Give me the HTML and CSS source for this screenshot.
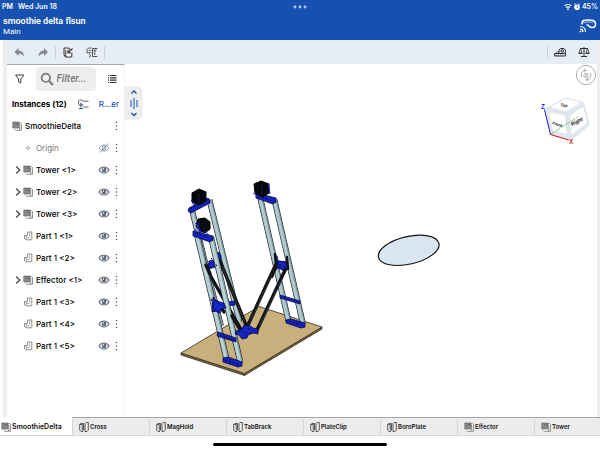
FILE: index.html
```html
<!DOCTYPE html>
<html lang="en">
<head>
<meta charset="utf-8">
<meta name="viewport" content="width=device-width, initial-scale=1">
<title>smoothie delta flsun</title>
<link rel="stylesheet" href="styles.css">
</head>
<body>
<svg class="defs" aria-hidden="true">
  <symbol id="assembly" viewBox="0 0 10 10"><path d="M3 2.500V1.500h5.500l1 1v6.800H3.500L2.500 8.500" fill="#fff" stroke="#666" stroke-width=".7"/><path d="M.8 1h6v6H.8z" fill="#8b8b8b" stroke="#666" stroke-width=".7"/><path d="M3 3h4.700v6" fill="none" stroke="#555" stroke-width=".7"/></symbol>
  <symbol id="part" viewBox="0 0 10 10"><path d="M4.500 1h4.300v7.800H3.500L1.500 7.800V4.500h3z" fill="#fff" stroke="#777" stroke-width=".8"/><path d="M1.500 4.800l2 1v2.500M3.500 6.500h2.200l1-1V1.500" fill="none" stroke="#888" stroke-width=".7"/></symbol>
  <symbol id="studio" viewBox="0 0 10 10"><path d="M4 9.500H2L.7 8V2.500L2 1.500h2.500v7M6 1.500L7 .5h2.300V8L8 9.500H6zM.7 2.500h2.600v6" fill="none" stroke="#333" stroke-width=".8"/></symbol>
  <symbol id="eye" viewBox="0 0 12 10"><path d="M1 5C3.500 1 8.500 1 11 5 8.500 9 3.500 9 1 5z" fill="#fff" stroke="#66727e" stroke-width="1.100"/><circle cx="6" cy="4.800" r="2.400" fill="#5b6773"/><circle cx="5.300" cy="4" r=".8" fill="#fff"/></symbol>
  <symbol id="eye-off" viewBox="0 0 12 10"><path d="M1 5C3.500 1 8.500 1 11 5 8.500 9 3.500 9 1 5z" fill="none" stroke="#8c98a4"/><circle cx="6" cy="5" r="1.800" fill="none" stroke="#8c98a4"/><path d="M2 9.500L10.500.5" stroke="#8c98a4"/></symbol>
  <symbol id="dots" viewBox="0 0 6 10"><g fill="#4d5966"><circle cx="3.500" cy="1.500" r=".8"/><circle cx="3.500" cy="5" r=".8"/><circle cx="3.500" cy="8.500" r=".8"/></g></symbol>
  <symbol id="chevron" viewBox="0 0 9 10"><path d="M2.200 1.500L5.700 5 2.200 8.500" fill="none" stroke="#555" stroke-width="1.500"/></symbol>
</svg>

<header class="top">
  <div class="status">
    <span class="clock"><span>PM</span><span>Wed Jun 18</span></span>
    <svg class="ellipsis" viewBox="0 0 14 4" aria-hidden="true"><g fill="#b4c9ec"><circle cx="2" cy="2" r="1.400"/><circle cx="7" cy="2" r="1.400"/><circle cx="12" cy="2" r="1.400"/></g></svg>
    <span class="battery">
      <svg viewBox="0 0 16 8" aria-hidden="true"><g fill="none" stroke="#fff" stroke-width="1.200"><path d="M.7 2.800Q4 .2 7.300 2.800M2 4.600q2-1.500 4 0"/><path d="M10.500 1.500l1-.8M15.500 1.500l-1-.8"/></g><circle cx="4" cy="6.200" r=".9" fill="#fff"/><circle cx="13" cy="4.200" r="2.800" fill="#fff"/><path d="M13 2.700v1.700h1.200" fill="none" stroke="#1651b0" stroke-width=".7"/></svg>
      <span>45%</span>
    </span>
  </div>
  <div class="title">
    <div>
      <h1>smoothie delta flsun</h1>
      <p>Main</p>
    </div>
    <button class="icon-btn" aria-label="Cast"><svg viewBox="0 0 18 14"><g fill="none" stroke="#fff"><path d="M3 5.500V4Q3 1.500 6 1.200q5-.7 8 .3 2.500.7 2.500 3.500 0 3.500-3 3.500Q11 8.500 10 7 9 5.700 7.500 6" stroke-width="1.500"/><path d="M1 7.500q5.500 0 5.500 5.500M1 10q3 0 3 3" stroke-width="1.200"/><path d="M4 4q5-2 10-.5" stroke-width=".6"/></g><circle cx="1.600" cy="12.400" r=".9" fill="#fff"/></svg></button>
  </div>
</header>

<main class="work">
  <div class="toolbar">
    <button class="icon-btn tool" aria-label="Undo"><svg viewBox="0 0 12 12"><path d="M5.500 2v2.500q5.500 0 5.500 6.500-1.500-3.500-5.500-3.500V10l-4-4z" fill="#85898f"/></svg></button>
    <button class="icon-btn tool" aria-label="Redo"><svg viewBox="0 0 12 12"><path d="M7 2v2.500q-5.500 0-5.500 6.500 1.500-3.500 5.500-3.500V10l4-4z" fill="#85898f"/></svg></button>
    <span class="rule"></span>
    <button class="icon-btn tool" aria-label="Insert"><svg viewBox="0 0 12 12"><path d="M4 3.500h6V11H4z" fill="#fff"/><g fill="none" stroke="#333"><path d="M2 9V2h4.500M2 9l1.500 2h6.300V6.500M3.800 11V4"/><path d="M10.500 2.500L6.200 6.800M6 4v3h3M6.500 2L8 4" stroke-width="1.200"/></g></svg></button>
    <button class="icon-btn tool" aria-label="Mate"><svg viewBox="0 0 12 12"><g fill="none" stroke="#444" stroke-width=".9"><path d="M5.500 2H2.500L1 3.500v3.300h4.500M6.500 10.500v-8h4.800M6.500 10.500h4.800M8.800 4v5M7.500 4.200h3M2.800 4.500h2M3 8.300l1.800 1.400-1.800 1.400"/></g></svg></button>
    <span class="rule"></span>
    <span class="spacer"></span>
    <span class="rule"></span>
    <button class="icon-btn tool" aria-label="Measure"><svg viewBox="0 0 12 12"><g fill="none" stroke="#2b2f36"><path d="M.6 7.500h10.800V10H.6zM5 7.500V4l1.500-1.500H10L11.400 4v4"/><circle cx="8.200" cy="5" r="1.300"/><path d="M2.500 8.500v1M4.500 8.500v1M6.500 8.500v1M8.500 8.500v1M2 6h3" stroke-width=".7"/></g></svg></button>
    <button class="icon-btn tool" aria-label="Mass properties"><svg viewBox="0 0 12 12"><g fill="none" stroke="#2b2f36"><path d="M6 1v9M2 2.500h8M3 10.500h6"/><path d="M2.500 2.500L1 7h3zM9.500 2.500L8 7h3z" stroke-width=".8"/><path d="M.5 7.500h4M7.500 7.500h4"/></g></svg></button>
  </div>

  <div class="body">
    <aside class="panel">
      <div class="search">
        <button class="icon-btn tool" aria-label="Filter options"><svg viewBox="0 0 12 12"><path d="M2.500 2H11L7.800 6v4L5.700 9V6z" fill="none" stroke="#444"/></svg></button>
        <label class="field">
          <svg viewBox="0 0 14 14" aria-hidden="true"><circle cx="5.800" cy="5.800" r="4.200" fill="none" stroke="#777" stroke-width="1.700"/><path d="M9 9l4 4" stroke="#777" stroke-width="2.200"/></svg>
          <input type="text" placeholder="Filter..." aria-label="Filter">
        </label>
        <button class="icon-btn tool" aria-label="List view"><svg viewBox="0 0 12 12"><path d="M2 2.500h1.200M2 4.800h1.200M2 7.200h1.200M2 9.500h1.200M4 2.500h6.500M4 4.800h6.500M4 7.200h6.500M4 9.500h6.500" stroke="#333" stroke-width="1.200"/></svg></button>
      </div>
      <div class="heading">
        <h2>Instances (12)</h2>
        <button class="icon-btn tool" aria-label="Add folder"><svg viewBox="0 0 12 12"><path d="M1.500 6V3L2.500 2H5l1 1.200h5.500M6.500 9h5" fill="none" stroke="#555" stroke-width=".9"/><path d="M4 4.500v5M1.500 7h5M2 10.500h4" fill="none" stroke="#33486b"/></svg></button>
        <a href="#">R...er</a>
      </div>
      <ul class="tree">
        <li class="root"><svg class="kind"><use href="#assembly"/></svg><span class="name">SmoothieDelta</span><button class="icon-btn menu" aria-label="Menu"><svg><use href="#dots"/></svg></button></li>
        <li class="origin"><svg class="kind" viewBox="0 0 10 10"><circle cx="5" cy="5" r="1.500" fill="#eee" stroke="#999" stroke-width=".8"/></svg><span class="name">Origin</span><button class="icon-btn eye" aria-label="Show"><svg><use href="#eye-off"/></svg></button><button class="icon-btn menu" aria-label="Menu"><svg><use href="#dots"/></svg></button></li>
        <li class="group"><button class="icon-btn open" aria-label="Expand"><svg><use href="#chevron"/></svg></button><svg class="kind"><use href="#assembly"/></svg><span class="name">Tower &lt;1&gt;</span><button class="icon-btn eye" aria-label="Hide"><svg><use href="#eye"/></svg></button><button class="icon-btn menu" aria-label="Menu"><svg><use href="#dots"/></svg></button></li>
        <li class="group"><button class="icon-btn open" aria-label="Expand"><svg><use href="#chevron"/></svg></button><svg class="kind"><use href="#assembly"/></svg><span class="name">Tower &lt;2&gt;</span><button class="icon-btn eye" aria-label="Hide"><svg><use href="#eye"/></svg></button><button class="icon-btn menu" aria-label="Menu"><svg><use href="#dots"/></svg></button></li>
        <li class="group"><button class="icon-btn open" aria-label="Expand"><svg><use href="#chevron"/></svg></button><svg class="kind"><use href="#assembly"/></svg><span class="name">Tower &lt;3&gt;</span><button class="icon-btn eye" aria-label="Hide"><svg><use href="#eye"/></svg></button><button class="icon-btn menu" aria-label="Menu"><svg><use href="#dots"/></svg></button></li>
        <li><svg class="kind"><use href="#part"/></svg><span class="name">Part 1 &lt;1&gt;</span><button class="icon-btn eye" aria-label="Hide"><svg><use href="#eye"/></svg></button><button class="icon-btn menu" aria-label="Menu"><svg><use href="#dots"/></svg></button></li>
        <li><svg class="kind"><use href="#part"/></svg><span class="name">Part 1 &lt;2&gt;</span><button class="icon-btn eye" aria-label="Hide"><svg><use href="#eye"/></svg></button><button class="icon-btn menu" aria-label="Menu"><svg><use href="#dots"/></svg></button></li>
        <li class="group"><button class="icon-btn open" aria-label="Expand"><svg><use href="#chevron"/></svg></button><svg class="kind"><use href="#assembly"/></svg><span class="name">Effector &lt;1&gt;</span><button class="icon-btn eye" aria-label="Hide"><svg><use href="#eye"/></svg></button><button class="icon-btn menu" aria-label="Menu"><svg><use href="#dots"/></svg></button></li>
        <li><svg class="kind"><use href="#part"/></svg><span class="name">Part 1 &lt;3&gt;</span><button class="icon-btn eye" aria-label="Hide"><svg><use href="#eye"/></svg></button><button class="icon-btn menu" aria-label="Menu"><svg><use href="#dots"/></svg></button></li>
        <li><svg class="kind"><use href="#part"/></svg><span class="name">Part 1 &lt;4&gt;</span><button class="icon-btn eye" aria-label="Hide"><svg><use href="#eye"/></svg></button><button class="icon-btn menu" aria-label="Menu"><svg><use href="#dots"/></svg></button></li>
        <li><svg class="kind"><use href="#part"/></svg><span class="name">Part 1 &lt;5&gt;</span><button class="icon-btn eye" aria-label="Hide"><svg><use href="#eye"/></svg></button><button class="icon-btn menu" aria-label="Menu"><svg><use href="#dots"/></svg></button></li>
      </ul>
    </aside>

    <section class="stage" aria-label="Model">
      <svg class="model" viewBox="125 64 472 353" aria-hidden="true">
        <ellipse cx="408.700" cy="250.300" rx="31" ry="13.800" transform="rotate(-13 408.700 250.300)" fill="#d9e5f1" stroke="#111" stroke-width="1.200"/>
        <!-- base plate -->
        <path d="M181 353l63.500 20.500v2L181 355zM244.500 373.500L322 327v2l-77.500 46.500z" fill="#7d6a47" stroke="#221c10" stroke-width=".7"/>
        <path d="M181 353l78-46.500L322 327l-77.500 46.500z" fill="#c8af7c" stroke="#33291a" stroke-width=".8"/>
        <!-- rear and right tower rails -->
        <g fill="none">
          <path d="M192 210l29 116M209.500 200l30 122M260 197l28.500 124M274.500 200l28.500 124" stroke="#141c1e" stroke-width="5.800"/>
          <path d="M192 210l29 116M209.500 200l30 122M260 197l28.500 124M274.500 200l28.500 124" stroke="#7f999f" stroke-width="4.800"/>
          <path d="M191.600 210l29 116M209.100 200l30 122M259.600 197l28.500 124M274.100 200l28.500 124" stroke="#b3cbcf" stroke-width="3"/>
        </g>
        <g fill="#1424c4" stroke="#04083c" stroke-width=".8">
          <path d="M189 208l19-10 2 2v3l-19 10-3-2zM256 193l20 5v4l-3 2-17-6zM280 295l20 6v3l-20-6zM286 320l5-1 14 4v4l-4 1-15-5zM227 302l8-1v4l-8 1z"/>
          <path d="M216 254l3-2 2 4v7l-3 1zM209 261l9-2 4 4-6 4-8 2z"/>
          <path d="M274 254l3 2 1 5 9 1 1 5-4 4-5-3-4 1 1-7z"/>
        </g>
        <path d="M192 193l7-4 7 3v9l-7 4-7-3zM254 184l7-3 8 3v9l-6 4-8-4z" fill="#05090d" stroke="#000"/>
        <path d="M268.500 184l1.500 10M191.500 200l1.500 4 7 2M253 193l4 3" stroke="#1626c8" fill="none"/>
        <path d="M199 193v11M262 185v10" stroke="#243038" stroke-width=".6"/>
        <!-- arms of the left towers -->
        <g fill="none" stroke="#111416" stroke-width="3.400" stroke-linecap="round">
          <path d="M220 261l26 64M206 268l37 65"/>
        </g>
        <path d="M222 266l23 57" fill="none" stroke="#41484c" stroke-width=".6"/>
        <!-- front tower -->
        <g fill="none">
          <path d="M197 235l29.500 124M211 237l29.500 126" stroke="#141c1e" stroke-width="6"/>
          <path d="M197 235l29.500 124M211 237l29.500 126" stroke="#7f999f" stroke-width="5"/>
          <path d="M196.600 235l29.500 124M210.600 237l29.500 126" stroke="#bad2d6" stroke-width="3.200"/>
        </g>
        <g fill="none" stroke="#111416" stroke-width="3.400" stroke-linecap="round">
          <path d="M276 264l-28 61M287 266l-30 64M232 316l11 18M206 265l4 9M217 302l7 10"/>
          <path d="M275 254l1 12M287 257l1 12M276 268l-4 9" stroke-width="2.400"/>
        </g>
        <path d="M272 274l-22 48M282 279l-22 46" fill="none" stroke="#41484c" stroke-width=".6"/>
        <g fill="#1424c4" stroke="#04083c" stroke-width=".8">
          <path d="M193 231l20 5v4l-3 2-17-6zM218 332l18 6v4l-19-6zM223 358l5-1 14 5v4l-4 1-15-5z"/>
          <path d="M213 297l3 4 8 2 2 5-5 1-1 4-5-2-3 1zM278 261l8 1 1 5-4 3-5-3z"/>
          <path d="M236 331l6-2 2-4 6 1 3 2 5 1v5l-5-1-5 2-1 3-5 1-3-4-4-1z"/>
        </g>
        <path d="M198 219l7-1 5 4v7l-5 4-5-2-4-5z" fill="#070b12" stroke="#000"/>
        <path d="M195 223l3 3-3 4 6 2M199 222l-1 5 5 8M205 231l4 4M238 333l5 1M245 329l7 3M216 305l6 3M214 309l3-4M280 263l4 4" fill="none" stroke="#2538e0" stroke-width=".9"/>
        <path d="M211 258l6 8M239 331l8 4M248 328l4 6M276 263l9 4M196 233l12 4M220 335l14 5M225 360l14 5M289 321l13 4M190 209l16-8M258 196l15 5M211 299l4 13" stroke="#050922" fill="none" stroke-dasharray="2 2"/>
      </svg>

      <div class="nav">
        <button class="icon-btn orbit" aria-label="Rotate view"><svg viewBox="0 0 22 22"><g fill="none" stroke="#999"><circle cx="11" cy="11" r="9.600" stroke-width=".8"/><path d="M6.500 13q-1.500-5 3.500-7M9 5l2 1-1.500 2M15.500 9q1.500 5-3.500 7M13 17l-2-1 1.500-2" stroke-width=".8"/><path d="M9 10l2-1 2 1v3H9zM11 10v3" stroke-width=".7"/></g></svg></button>
        <svg class="cube" viewBox="539 94 54 52" role="img" aria-label="View cube">
          <path d="M546 109q0-1.500 1.500-2l17-9q1.500-.7 3-.3l15 4q1.500.5 2 2l5 20q.4 1.500-1 2.500l-16 13q-1.500 1.200-3 .9l-19-6z" fill="#dfe6ed"/>
          <g fill="#fff">
            <path d="M551.500 107.500q-1.500-.6 0-1.400l13.500-6.800q1.500-.6 3-.2l11.500 3.200q1.500.5.200 1.300l-12 7q-1.500.8-3 .4z"/>
            <path d="M549.500 113.500q-.3-1.600 1.200-1.300l12 3q1.700.5 2 2l2 15q.2 1.500-1.300 1.200l-11-2.500q-1.500-.4-1.800-2z"/>
            <path d="M570 117q0-1.600 1.500-2.500l10-6.700q1.500-.9 2 .8l3.500 13q.3 1.500-1 2.500l-13 9.500q-1.500 1-1.600-.8z"/>
          </g>
          <path d="M550.500 134.500l27-17.500" stroke="#4bb04b" stroke-width=".7" stroke-dasharray="5 1"/>
          <path d="M550.500 134.500l-6-25" stroke="#1010d0"/>
          <path d="M550.500 134.500l18 5.500" stroke="#d01010"/>
          <g class="face">
            <text class="small" transform="translate(552 124) rotate(18)">Front</text>
            <text transform="translate(572 126) rotate(-27)">Right</text>
            <text class="small" transform="translate(560 106) rotate(10)">Top</text>
          </g>
          <text class="axis-z" x="541" y="109">Z</text>
          <text class="axis-x" x="569" y="144">X</text>
        </svg>
      </div>

      <button class="icon-btn handle" aria-label="Resize panel"><svg viewBox="0 0 16 32"><g fill="none" stroke="#1651b0"><path d="M6 6.500L8.500 4 11 6.500M6 26l2.500 2.500L11 26" stroke-width="1.300"/><path d="M5.500 13v7M11.500 13v7M8.500 11v11"/></g></svg></button>
    </section>
  </div>
</main>

<nav class="tabs" aria-label="Documents">
  <button class="tab active"><svg><use href="#assembly"/></svg>SmoothieDelta</button>
  <button class="tab"><svg><use href="#studio"/></svg>Cross</button>
  <button class="tab"><svg><use href="#studio"/></svg>MagHold</button>
  <button class="tab"><svg><use href="#studio"/></svg>TabBrack</button>
  <button class="tab"><svg><use href="#studio"/></svg>PlateClip</button>
  <button class="tab"><svg><use href="#studio"/></svg>BoroPlate</button>
  <button class="tab"><svg><use href="#assembly"/></svg>Effector</button>
  <button class="tab"><svg><use href="#assembly"/></svg>Tower</button>
</nav>
<footer class="home"><span></span></footer>
</body>
</html>
```

FILE: styles.css
```css
* { box-sizing: border-box; }

body {
  margin: 0;
  min-height: 100vh;
  display: flex;
  flex-direction: column;
  overflow-x: hidden;
  background: #fff;
  color: #000;
  font: 500 8px/10px Inter, "Liberation Sans", sans-serif;
}

h1, h2, p, ul { margin: 0; padding: 0; }
.defs { display: none; }

.icon-btn {
  display: block;
  flex: none;
  padding: 0;
  border: 0;
  background: none;
}
.icon-btn svg { display: block; width: 100%; height: 100%; }
.tool { width: 12px; height: 12px; }

/* Header */
.top { background: #1651b0; color: #fff; height: 40px; }

.status {
  display: grid;
  grid-template-columns: 1fr auto 1fr;
  align-items: center;
  height: 13px;
  padding: 0 2px;
  font-size: 7px;
  font-weight: 600;
}
.clock { display: flex; gap: 5px; }
.ellipsis { width: 14px; height: 4px; }
.battery { display: flex; justify-content: flex-end; align-items: center; gap: 2px; }
.battery svg { width: 16px; height: 8px; }

.title {
  display: flex;
  justify-content: space-between;
  align-items: center;
  padding: 3px 3px 0;
}
.title h1 { font: 600 9px/11px Roboto, sans-serif; }
.title p { font: 400 8px/9px Roboto, sans-serif; }
.title .icon-btn { width: 18px; height: 14px; }

/* Workspace */
.work {
  flex: 1;
  display: flex;
  flex-direction: column;
  margin-left: 3px;
  border-left: 4px solid #eeeeee;
  border-right: 3px solid #eeeeee;
}

.toolbar {
  display: flex;
  align-items: center;
  gap: 12px;
  height: 24px;
  padding: 0 7px 0 6px;
  background: #e6edf7;
}
.rule { width: 1px; height: 13px; margin: 0 -6px; background: #c5ced9; }
.spacer { flex: 1; }

.body {
  flex: 1;
  display: grid;
  grid-template-columns: 118px 1fr;
}

.panel { border-top: 1px solid #a6a6a6; border-right: 1px solid #f4f4f4; }

.search {
  display: flex;
  align-items: center;
  justify-content: space-between;
  height: 28px;
  padding: 0 6px;
}
.field {
  display: flex;
  align-items: center;
  gap: 3px;
  width: 60px;
  height: 24px;
  padding-left: 4px;
  border-radius: 4px;
  background: #eeeeee;
}
.field svg { flex: none; width: 14px; height: 14px; }
.field input {
  min-width: 0;
  flex: 1;
  padding: 0;
  border: 0;
  outline: 0;
  background: none;
  font: italic 600 10px/12px Roboto, sans-serif;
}
.field input::placeholder { color: #808080; opacity: 1; }

.heading {
  display: flex;
  align-items: center;
  justify-content: space-between;
  height: 22px;
  padding: 0 5px;
}
.heading h2 { font-size: 8px; font-weight: 700; line-height: 10px; }
.heading a { color: #1651b0; text-decoration: none; }

.tree { list-style: none; }
.tree li {
  display: flex;
  align-items: center;
  height: 22px;
  padding: 0 5px 0 16px;
}
.tree .root { padding-left: 5px; }
.tree .group { padding-left: 7px; }
.tree .open { width: 9px; height: 10px; }
.tree .kind { flex: none; width: 10px; height: 10px; margin-right: 3px; }
.tree .name { flex: 1; white-space: nowrap; }
.tree .origin .name { color: #777; font-weight: 400; }
.tree .eye { width: 12px; height: 10px; margin-right: 3px; }
.tree .menu { width: 6px; height: 10px; }

.stage { position: relative; min-width: 0; }
.model { display: block; width: 100%; height: 100%; }

.nav {
  position: absolute;
  top: 0;
  right: 0;
  display: flex;
  flex-direction: column;
  align-items: flex-end;
}
.orbit { width: 22px; height: 22px; }
.cube { width: 54px; height: 52px; margin: 8px 4px 0 0; }
.face text { font: italic 700 5px Inter, sans-serif; fill: #222; }
.face .small { font-size: 4px; }
.axis-z, .axis-x { font: 600 6px Inter, sans-serif; }
.axis-z { fill: #1010d0; }
.axis-x { fill: #d01010; }

.handle {
  position: absolute;
  top: 23px;
  left: 0;
  width: 17px;
  height: 32px;
  border-radius: 0 6px 6px 0;
  background: #eeeeee;
  box-shadow: 0 0 1px #999;
}

/* Document tabs */
.tabs { display: flex; overflow: hidden; }
.tab {
  display: flex;
  align-items: center;
  flex: none;
  gap: 1px;
  width: 77px;
  height: 19px;
  padding: 0 0 0 6px;
  border: solid #d6d6d6;
  border-width: 1px 0 1px 1px;
  border-top-color: #a6a6a6;
  background: #ececec;
  color: #111;
  font: 600 6px/8px Inter, sans-serif;
}
.tab svg { flex: none; width: 10px; height: 10px; }
.tab.active {
  width: 72px;
  padding-left: 1px;
  border-color: #fff #fff #d6d6d6;
  border-left: 0;
  background: #fff;
  font-size: 7px;
}

.home { display: flex; justify-content: center; padding: 7px 0 4px; }
.home span { width: 29%; height: 3px; border-radius: 2px; background: #000; }
```
